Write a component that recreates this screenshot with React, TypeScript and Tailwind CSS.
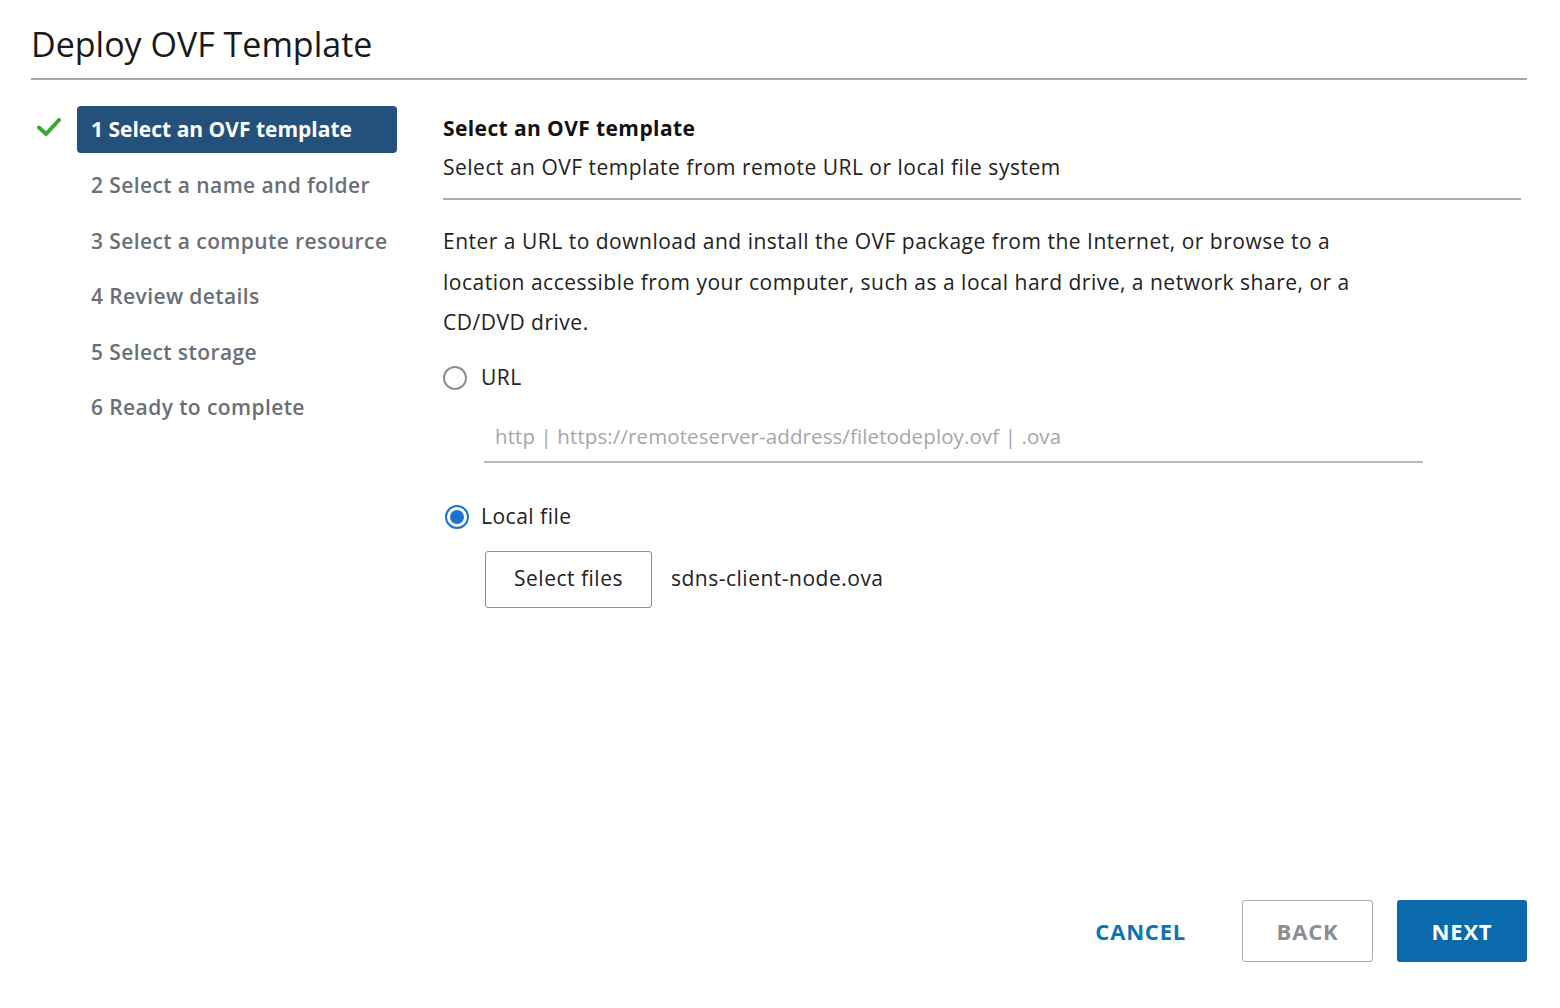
import React from "react";

const steps = [
  "Select an OVF template",
  "Select a name and folder",
  "Select a compute resource",
  "Review details",
  "Select storage",
  "Ready to complete",
];

function CheckMark() {
  return (
    <svg viewBox="0 0 24 18" className="h-[18px] w-[24px]" aria-hidden>
      <path
        d="M2 9.5 L9 16 L22 2"
        fill="none"
        stroke="#3aa832"
        strokeWidth="4"
        strokeLinecap="round"
        strokeLinejoin="round"
      />
    </svg>
  );
}

function Radio({ checked }: { checked?: boolean }) {
  return checked ? (
    <span className="flex h-[24px] w-[24px] items-center justify-center rounded-full border-[2px] border-[#1a73d0] bg-white">
      <span className="h-[14px] w-[14px] rounded-full bg-[#1a73d0]" />
    </span>
  ) : (
    <span className="h-[24px] w-[24px] rounded-full border-[2px] border-[#8c8f94] bg-white" />
  );
}

export default function App() {
  return (
    <div
      className="flex h-[1008px] w-[1560px] flex-col bg-white px-[31px] text-[#1b1b1b]"
      style={{ fontFamily: "'Open Sans', Lato, sans-serif" }}
    >
      {/* Header */}
      <h1 className="pt-[23px] text-[34px] font-normal leading-[42px] text-[#1a1a1a]">
        Deploy OVF Template
      </h1>
      <div className="mt-[13px] h-[2px] w-[1496px] bg-[#a3a6ab]" />

      <div className="flex flex-1 items-start">
        {/* Steps */}
        <nav className="flex w-[412px] flex-col pt-[26px]">
          {steps.map((label, i) =>
            i === 0 ? (
              <div key={label} className="flex items-center">
                <span className="-mt-[6px] flex w-[46px] justify-start pl-[6px]">
                  <CheckMark />
                </span>
                <div className="flex h-[47px] w-[320px] items-center rounded-[4px] bg-[#24507c] pl-[14px] text-[21px] font-bold text-white">
                  {i + 1} {label}
                </div>
              </div>
            ) : (
              <div
                key={label}
                className="flex h-[55.5px] items-center pl-[60px] text-[21px] font-semibold tracking-[0.4px] text-[#6a6f77]"
                style={i === 1 ? { marginTop: "5px" } : undefined}
              >
                {i + 1} {label}
              </div>
            )
          )}
        </nav>

        {/* Content */}
        <main className="flex flex-1 flex-col pt-[34px] text-[21px] tracking-[0.5px] text-[#222]">
          <div className="flex w-[1078px] flex-col border-b-[2px] border-[#a9acb1] pb-[17px]">
            <h2 className="font-bold leading-[28px] tracking-[0.4px] text-[#111]">
              Select an OVF template
            </h2>
            <p className="mt-[11px] leading-[28px]">
              Select an OVF template from remote URL or local file system
            </p>
          </div>

          <p className="mt-[21px] w-[920px] leading-[40.5px]">
            Enter a URL to download and install the OVF package from the Internet, or browse to a
            location accessible from your computer, such as a local hard drive, a network share, or a
            CD/DVD drive.
          </p>

          <label className="mt-[21px] flex h-[28px] items-center gap-[14px]">
            <Radio />
            <span>URL</span>
          </label>

          <div className="ml-[41px] mt-[30px] w-[939px] border-b-[2px] border-[#b4b7bc] pb-[11px] pl-[11px] text-[20.5px] leading-[28px] tracking-[0.1px] text-[#a4a7ab]">
            http | https://remoteserver-address/filetodeploy.ovf | .ova
          </div>

          <label className="ml-[2px] mt-[40px] flex h-[28px] items-center gap-[12px]">
            <Radio checked />
            <span>Local file</span>
          </label>

          <div className="ml-[42px] mt-[20px] flex items-center gap-[19px]">
            <button className="h-[57px] w-[167px] rounded-[3px] border-[1.5px] border-[#8d9096] bg-white tracking-[0.5px] text-[#222]">
              Select files
            </button>
            <span>sdns-client-node.ova</span>
          </div>
        </main>
      </div>

      {/* Footer */}
      <footer className="flex w-[1496px] items-center justify-end gap-[24px] pb-[46px] text-[22px] font-bold tracking-[0.8px]">
        <button className="mr-[32px] text-[#0f72b5]">CANCEL</button>
        <button className="h-[62px] w-[131px] rounded-[3px] border-[1.5px] border-[#a9acb1] bg-white text-[#8a8d92]">
          BACK
        </button>
        <button className="h-[62px] w-[130px] rounded-[3px] bg-[#0b6aab] text-white">NEXT</button>
      </footer>
    </div>
  );
}
